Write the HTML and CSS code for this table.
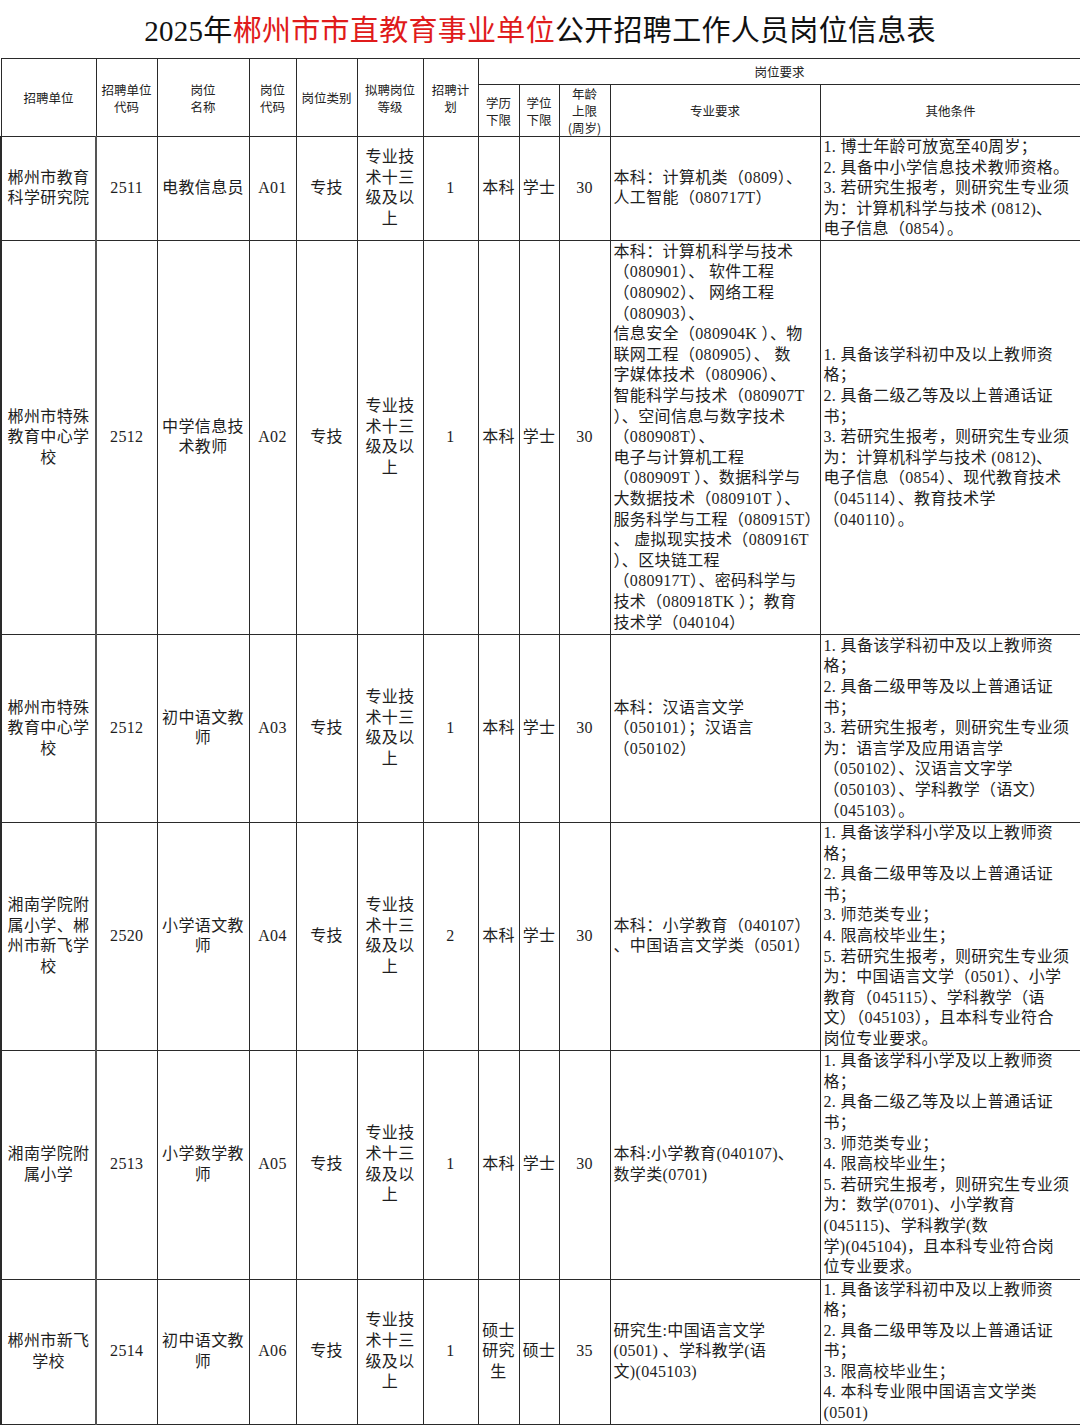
FILE: index.html
```html
<!DOCTYPE html>
<html lang="zh-CN">
<head>
<meta charset="utf-8">
<title>2025年郴州市市直教育事业单位公开招聘工作人员岗位信息表</title>
<link rel="stylesheet" href="styles.css">
</head>
<body>
<div class="page">
  <h1 class="title">2025年<span class="red">郴州市市直教育事业单位</span>公开招聘工作人员岗位信息表</h1>
  <table class="grid">
    <colgroup>
      <col class="c1"><col class="c2"><col class="c3"><col class="c4"><col class="c5"><col class="c6"><col class="c7"><col class="c8"><col class="c9"><col class="c10"><col class="c11"><col class="c12">
    </colgroup>
    <thead>
      <tr class="h1">
        <th rowspan="2">招聘单位</th>
        <th rowspan="2">招聘单位<br>代码</th>
        <th rowspan="2">岗位<br>名称</th>
        <th rowspan="2">岗位<br>代码</th>
        <th rowspan="2">岗位类别</th>
        <th rowspan="2">拟聘岗位<br>等级</th>
        <th rowspan="2">招聘计<br>划</th>
        <th colspan="5" class="top">岗位要求</th>
      </tr>
      <tr class="h2">
        <th>学历<br>下限</th>
        <th>学位<br>下限</th>
        <th>年龄<br>上限<br>(周岁)</th>
        <th>专业要求</th>
        <th>其他条件</th>
      </tr>
    </thead>
    <tbody>
      <tr class="r1">
        <td class="c">郴州市教育<br>科学研究院</td>
        <td class="c">2511</td>
        <td class="c">电教信息员</td>
        <td class="c">A01</td>
        <td class="c">专技</td>
        <td class="c">专业技<br>术十三<br>级及以<br>上</td>
        <td class="c">1</td>
        <td class="c">本科</td>
        <td class="c">学士</td>
        <td class="c">30</td>
        <td class="l">本科：计算机类（0809）、<br>人工智能（080717T）</td>
        <td class="l">1. 博士年龄可放宽至40周岁；<br>2. 具备中小学信息技术教师资格。<br>3. 若研究生报考，则研究生专业须<br>为：计算机科学与技术 (0812)、<br>电子信息（0854）。</td>
      </tr>
      <tr class="r2">
        <td class="c">郴州市特殊<br>教育中心学<br>校</td>
        <td class="c">2512</td>
        <td class="c">中学信息技<br>术教师</td>
        <td class="c">A02</td>
        <td class="c">专技</td>
        <td class="c">专业技<br>术十三<br>级及以<br>上</td>
        <td class="c">1</td>
        <td class="c">本科</td>
        <td class="c">学士</td>
        <td class="c">30</td>
        <td class="l">本科：计算机科学与技术<br>（080901）、 软件工程<br>（080902）、 网络工程<br>（080903）、<br>信息安全（080904K ）、物<br>联网工程（080905）、 数<br>字媒体技术（080906）、<br>智能科学与技术（080907T<br>）、空间信息与数字技术<br>（080908T）、<br>电子与计算机工程<br>（080909T ）、数据科学与<br>大数据技术（080910T ）、<br>服务科学与工程（080915T）<br>、 虚拟现实技术（080916T<br>）、区块链工程<br>（080917T）、密码科学与<br>技术（080918TK ）；教育<br>技术学（040104）</td>
        <td class="l">1. 具备该学科初中及以上教师资<br>格；<br>2. 具备二级乙等及以上普通话证<br>书；<br>3. 若研究生报考，则研究生专业须<br>为：计算机科学与技术 (0812)、<br>电子信息（0854）、现代教育技术<br>（045114）、教育技术学<br>（040110）。</td>
      </tr>
      <tr class="r3">
        <td class="c">郴州市特殊<br>教育中心学<br>校</td>
        <td class="c">2512</td>
        <td class="c">初中语文教<br>师</td>
        <td class="c">A03</td>
        <td class="c">专技</td>
        <td class="c">专业技<br>术十三<br>级及以<br>上</td>
        <td class="c">1</td>
        <td class="c">本科</td>
        <td class="c">学士</td>
        <td class="c">30</td>
        <td class="l">本科：汉语言文学<br>（050101）；汉语言<br>（050102）</td>
        <td class="l">1. 具备该学科初中及以上教师资<br>格；<br>2. 具备二级甲等及以上普通话证<br>书；<br>3. 若研究生报考，则研究生专业须<br>为：语言学及应用语言学<br>（050102）、汉语言文字学<br>（050103）、学科教学（语文）<br>（045103）。</td>
      </tr>
      <tr class="r4">
        <td class="c">湘南学院附<br>属小学、郴<br>州市新飞学<br>校</td>
        <td class="c">2520</td>
        <td class="c">小学语文教<br>师</td>
        <td class="c">A04</td>
        <td class="c">专技</td>
        <td class="c">专业技<br>术十三<br>级及以<br>上</td>
        <td class="c">2</td>
        <td class="c">本科</td>
        <td class="c">学士</td>
        <td class="c">30</td>
        <td class="l">本科：小学教育（040107）<br>、中国语言文学类（0501）</td>
        <td class="l">1. 具备该学科小学及以上教师资<br>格；<br>2. 具备二级甲等及以上普通话证<br>书；<br>3. 师范类专业；<br>4. 限高校毕业生；<br>5. 若研究生报考，则研究生专业须<br>为：中国语言文学（0501）、小学<br>教育（045115）、学科教学（语<br>文）（045103），且本科专业符合<br>岗位专业要求。</td>
      </tr>
      <tr class="r5">
        <td class="c">湘南学院附<br>属小学</td>
        <td class="c">2513</td>
        <td class="c">小学数学教<br>师</td>
        <td class="c">A05</td>
        <td class="c">专技</td>
        <td class="c">专业技<br>术十三<br>级及以<br>上</td>
        <td class="c">1</td>
        <td class="c">本科</td>
        <td class="c">学士</td>
        <td class="c">30</td>
        <td class="l">本科:小学教育(040107)、<br>数学类(0701)</td>
        <td class="l">1. 具备该学科小学及以上教师资<br>格；<br>2. 具备二级乙等及以上普通话证<br>书；<br>3. 师范类专业；<br>4. 限高校毕业生；<br>5. 若研究生报考，则研究生专业须<br>为：数学(0701)、小学教育<br>(045115)、学科教学(数<br>学)(045104)，且本科专业符合岗<br>位专业要求。</td>
      </tr>
      <tr class="r6">
        <td class="c">郴州市新飞<br>学校</td>
        <td class="c">2514</td>
        <td class="c">初中语文教<br>师</td>
        <td class="c">A06</td>
        <td class="c">专技</td>
        <td class="c">专业技<br>术十三<br>级及以<br>上</td>
        <td class="c">1</td>
        <td class="c">硕士<br>研究<br>生</td>
        <td class="c">硕士</td>
        <td class="c">35</td>
        <td class="l">研究生:中国语言文学<br>(0501) 、学科教学(语<br>文)(045103)</td>
        <td class="l">1. 具备该学科初中及以上教师资<br>格；<br>2. 具备二级甲等及以上普通话证<br>书；<br>3. 限高校毕业生；<br>4. 本科专业限中国语言文学类<br>(0501)</td>
      </tr>
    </tbody>
  </table>
</div>
</body>
</html>
```

FILE: styles.css
```css
html, body {
  margin: 0;
  padding: 0;
  background: #ffffff;
}

.page {
  width: 1080px;
  color: #1a1a1a;
}

.title {
  margin: 0;
  height: 58px;
  line-height: 62px;
  text-align: center;
  font-family: "Liberation Serif", "Noto Sans CJK SC", serif;
  font-weight: 400;
  font-size: 29px;
  letter-spacing: 0.3px;
  color: #111111;
}

.red {
  color: #e01b1b;
}

.grid {
  width: 1080px;
  border-collapse: collapse;
  table-layout: fixed;
}

.c1 { width: 95px; }
.c2 { width: 61px; }
.c3 { width: 92px; }
.c4 { width: 47px; }
.c5 { width: 61px; }
.c6 { width: 66px; }
.c7 { width: 55px; }
.c8 { width: 41px; }
.c9 { width: 40px; }
.c10 { width: 51px; }
.c11 { width: 210px; }
.c12 { width: 261px; }

.grid th,
.grid td {
  border: 1px solid #2a2a2a;
  padding: 0;
  vertical-align: middle;
}

.grid th {
  font-family: "Noto Sans CJK SC", sans-serif;
  font-weight: 400;
  font-size: 12.5px;
  line-height: 17px;
  text-align: center;
  color: #222222;
}

.h1 { height: 26px; }
.h2 { height: 49px; }

.grid td {
  font-family: "Liberation Serif", "Noto Sans CJK SC", serif;
  font-size: 16px;
  letter-spacing: 0.35px;
  line-height: 20.6px;
  color: #1e1e1e;
  white-space: nowrap;
  overflow: hidden;
}

.grid td.c {
  text-align: center;
}

.grid td.l {
  text-align: left;
  padding-left: 3px;
}

.grid td:first-child {
  border-left-width: 2px;
  border-right: 2px solid #555555;
}

.r1 { height: 103px; }
.r2 { height: 394px; }
.r3 { height: 188px; }
.r4 { height: 227px; }
.r5 { height: 229px; }
.r6 { height: 144px; }
```
